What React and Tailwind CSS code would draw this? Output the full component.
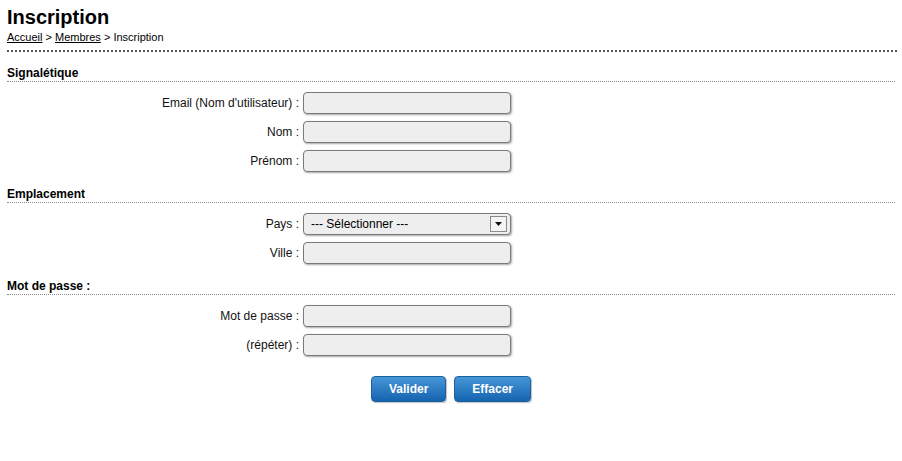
import React from 'react';

// Text input with the rounded grey look of the original form
const Field = ({ type = "text" }) => (
    <input
        type={type}
        className="h-[22px] w-[208px] rounded-[4px] border border-[#7a7a7a] bg-[#eeeeee] px-2 text-[12px] shadow-[1px_1px_2px_rgba(0,0,0,0.35)] outline-none"
    />
);

const SelectBox = () => (
    <div className="flex h-[22px] w-[208px] items-center justify-between rounded-[4px] border border-[#7a7a7a] bg-[#eeeeee] pl-[7px] pr-[3px] text-[12px] text-black shadow-[1px_1px_2px_rgba(0,0,0,0.35)]">
        <span>--- Sélectionner ---</span>
        <span className="flex h-[16px] w-[17px] items-center justify-center border border-[#8a8a8a] bg-[#f4f4f4]">
            <svg width="7" height="4" viewBox="0 0 7 4">
                <path d="M0 0h7L3.5 4z" fill="#111" />
            </svg>
        </span>
    </div>
);

const Row = ({ label, children }) => (
    <div className="flex items-center">
        <label className="w-[296px] pr-[4px] text-right text-[12px] text-[#111]">{label}</label>
        {children}
    </div>
);

const Section = ({ title, children }) => (
    <section>
        <h2 className="border-b border-dotted border-[#8c8c8c] pb-[1px] text-[12px] font-bold leading-[14px] text-black">
            {title}
        </h2>
        <div className="mt-[10px] flex flex-col gap-[7px]">{children}</div>
    </section>
);

const Button = ({ children }) => (
    <button className="h-[26px] rounded-[4px] border border-[#1a5f9e] bg-gradient-to-b from-[#4596d6] to-[#1464b0] px-[17px] text-[12px] font-bold text-white shadow-[1px_1px_1px_rgba(0,0,0,0.25)]">
        {children}
    </button>
);

export default function App() {
    return (
        <div className="min-h-screen bg-white px-[7px] pt-[5px] font-['Liberation_Sans',Arial,sans-serif]">
            {/* Header */}
            <h1 className="text-[20px] font-bold leading-[24px] text-black">Inscription</h1>
            <div className="pt-[1px] text-[11px] leading-[14px] text-black">
                <a href="#" className="underline">Accueil</a>
                {" > "}
                <a href="#" className="underline">Membres</a>
                {" > Inscription"}
            </div>
            <div className="mt-[6px] mr-[-2px] border-b-2 border-dotted border-[#555]" />

            <div className="mt-[14px] flex flex-col gap-[15px]">
                <Section title="Signalétique">
                    <Row label="Email (Nom d'utilisateur) :"><Field /></Row>
                    <Row label="Nom :"><Field /></Row>
                    <Row label="Prénom :"><Field /></Row>
                </Section>

                <Section title="Emplacement">
                    <Row label="Pays :"><SelectBox /></Row>
                    <Row label="Ville :"><Field /></Row>
                </Section>

                <Section title="Mot de passe :">
                    <Row label="Mot de passe :"><Field type="password" /></Row>
                    <Row label="(répéter) :"><Field type="password" /></Row>
                </Section>
            </div>

            <div className="mt-[20px] flex justify-center gap-[8px]">
                <Button>Valider</Button>
                <Button>Effacer</Button>
            </div>
        </div>
    );
}
